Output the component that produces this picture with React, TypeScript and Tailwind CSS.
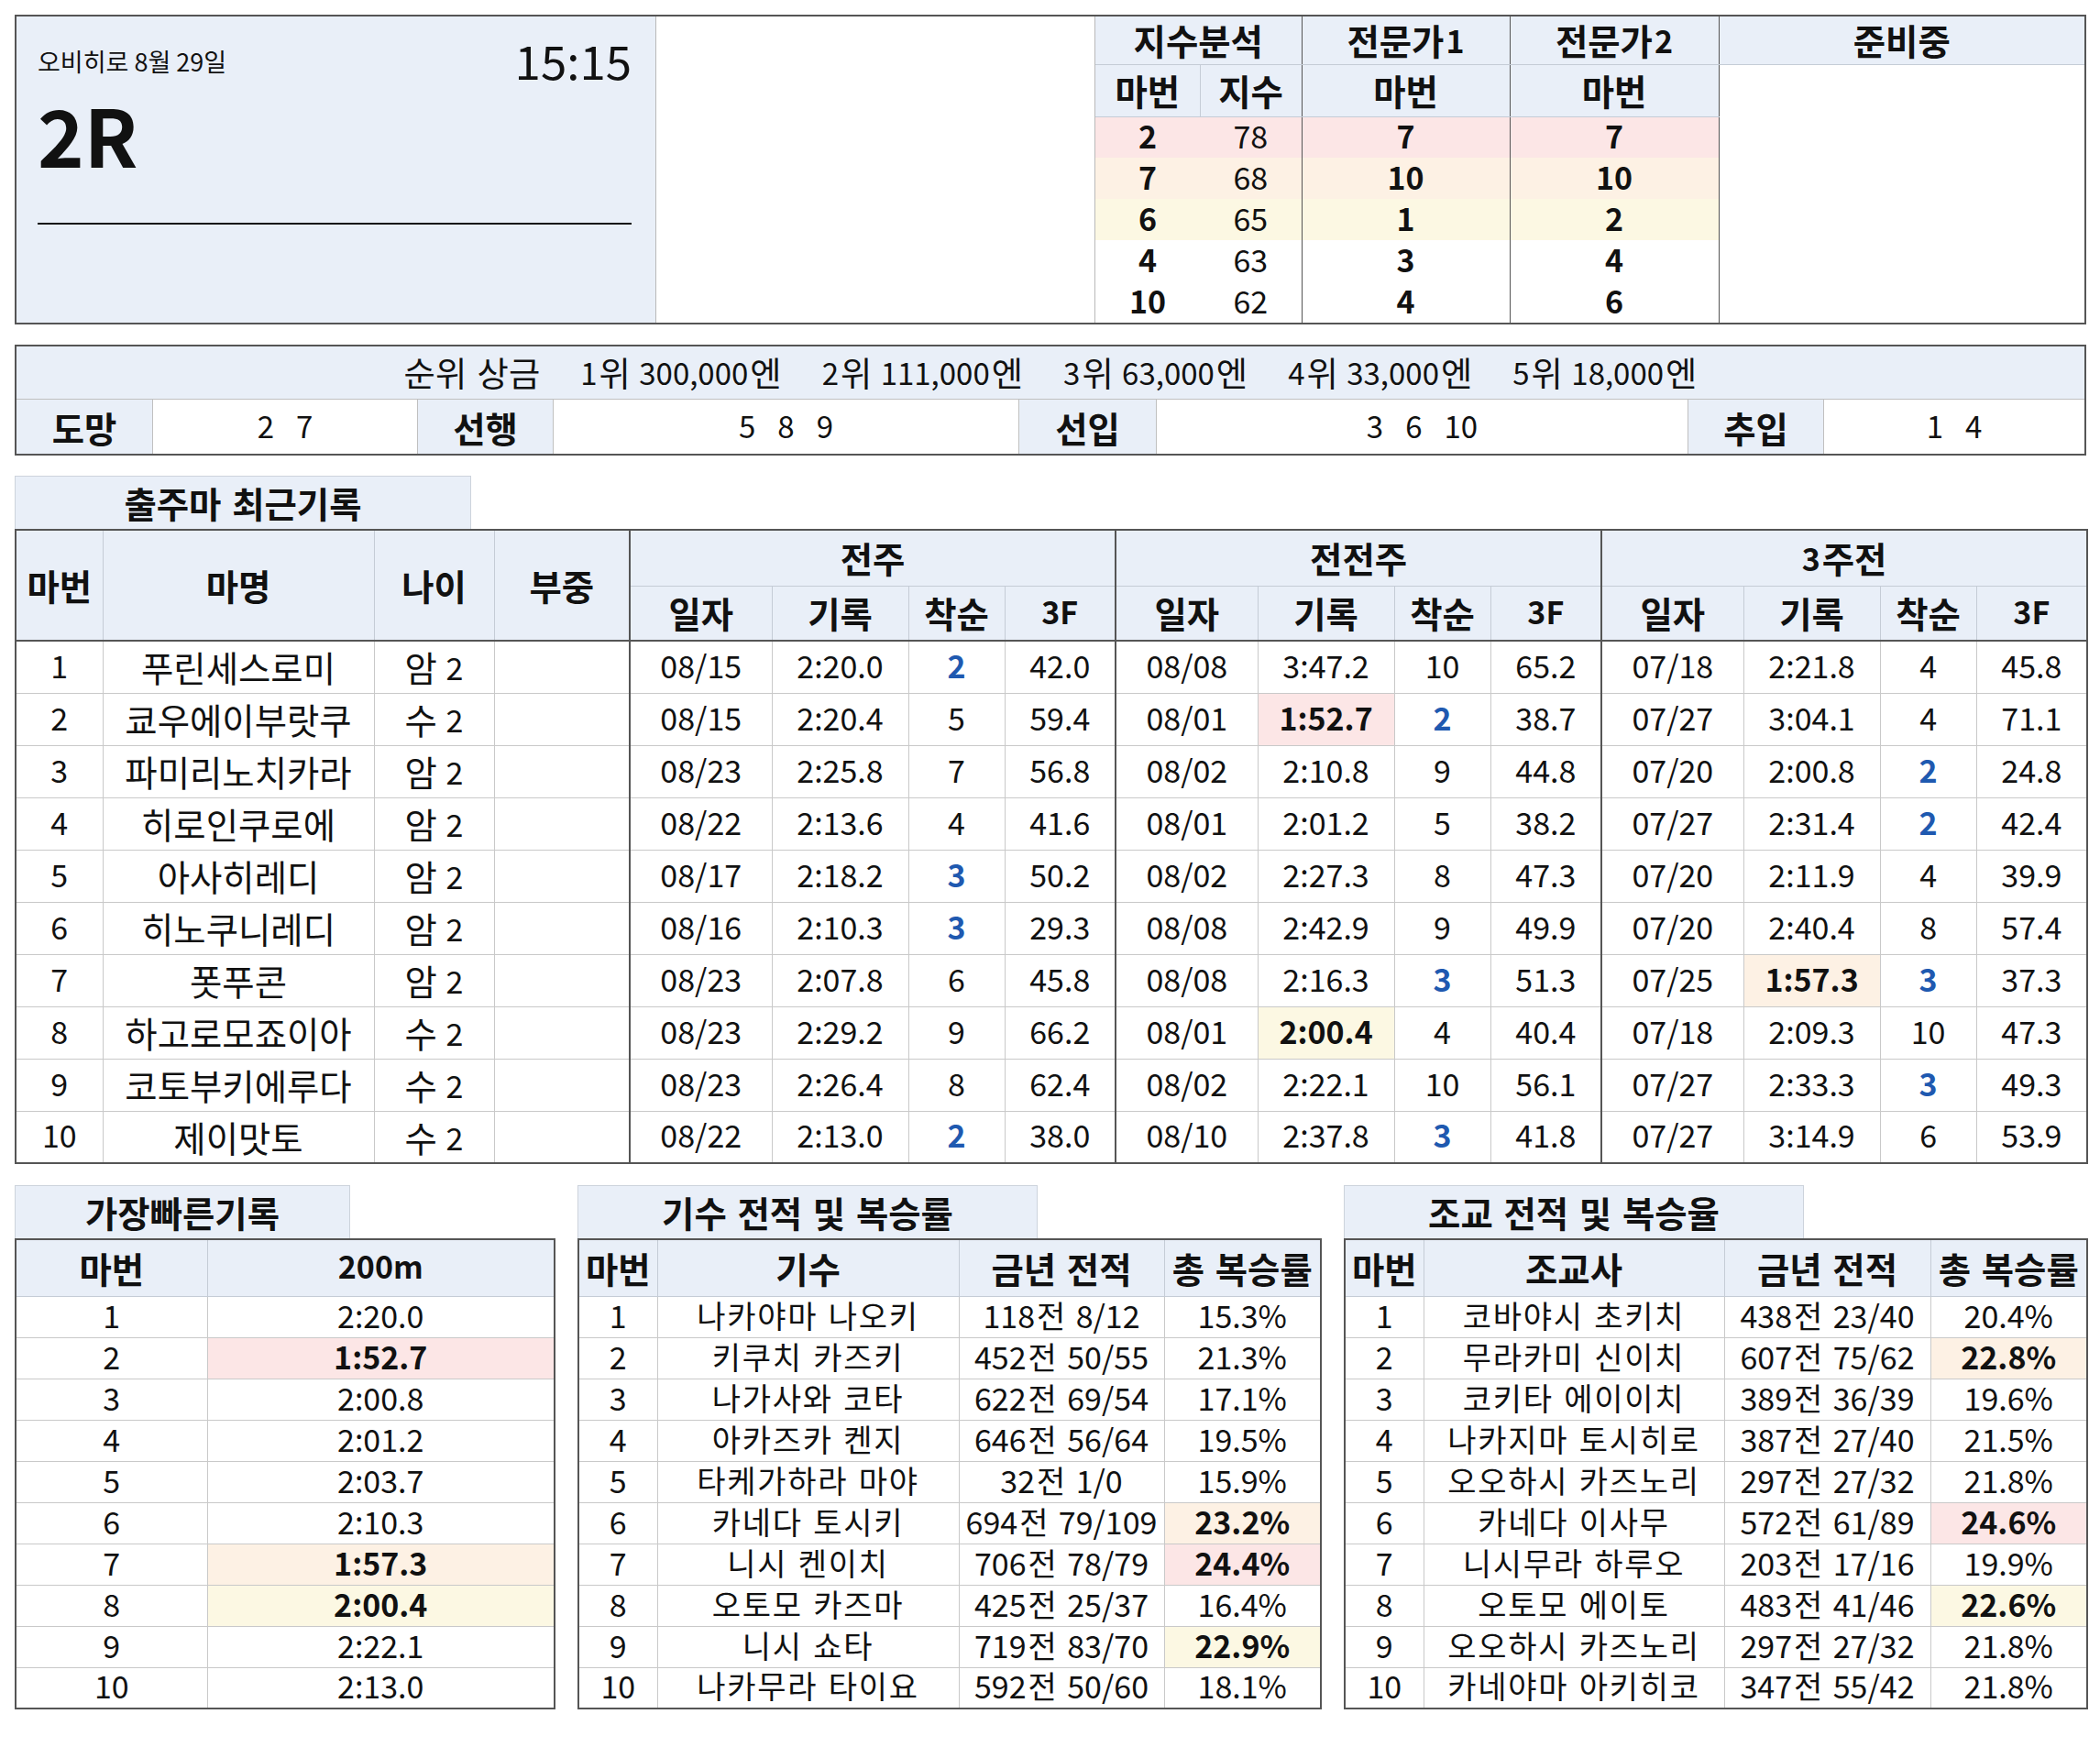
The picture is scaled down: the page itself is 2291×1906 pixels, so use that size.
import React from 'react';

const HB = 'bg-[#e9eff8]';
const HL: Record<string, string> = {
  p: 'bg-[#fce6e6] font-bold',
  o: 'bg-[#fdf1e4] font-bold',
  y: 'bg-[#fcf8e3] font-bold',
  n: '',
};

function K({ t, small }: { t: string | number; small?: boolean }) {
  if (typeof t === 'number') return <span>{t}</span>;
  const parts = t.split(/([\uAC00-\uD7A3]+)/).filter((p) => p.length > 0);
  const hk = small ? 'tracking-[0.05em]' : 'text-[1.13em] translate-y-[0.05em]';
  return (
    <span className="inline-flex items-baseline gap-[2px] whitespace-pre">
      {parts.map((p, i) =>
        /[\uAC00-\uD7A3]/.test(p) ? (
          <span key={i} className={hk}>
            {p}
          </span>
        ) : (
          <span key={i}>{p}</span>
        ),
      )}
    </span>
  );
}

type Week = [string, string, number, string, string?];
type Horse = [number, string, string, Week, Week, Week];

const horses: Horse[] = [
  [1, '푸린세스로미', '암 2', ['08/15', '2:20.0', 2, '42.0'], ['08/08', '3:47.2', 10, '65.2'], ['07/18', '2:21.8', 4, '45.8']],
  [2, '쿄우에이부랏쿠', '수 2', ['08/15', '2:20.4', 5, '59.4'], ['08/01', '1:52.7', 2, '38.7', 'p'], ['07/27', '3:04.1', 4, '71.1']],
  [3, '파미리노치카라', '암 2', ['08/23', '2:25.8', 7, '56.8'], ['08/02', '2:10.8', 9, '44.8'], ['07/20', '2:00.8', 2, '24.8']],
  [4, '히로인쿠로에', '암 2', ['08/22', '2:13.6', 4, '41.6'], ['08/01', '2:01.2', 5, '38.2'], ['07/27', '2:31.4', 2, '42.4']],
  [5, '아사히레디', '암 2', ['08/17', '2:18.2', 3, '50.2'], ['08/02', '2:27.3', 8, '47.3'], ['07/20', '2:11.9', 4, '39.9']],
  [6, '히노쿠니레디', '암 2', ['08/16', '2:10.3', 3, '29.3'], ['08/08', '2:42.9', 9, '49.9'], ['07/20', '2:40.4', 8, '57.4']],
  [7, '폿푸콘', '암 2', ['08/23', '2:07.8', 6, '45.8'], ['08/08', '2:16.3', 3, '51.3'], ['07/25', '1:57.3', 3, '37.3', 'o']],
  [8, '하고로모죠이아', '수 2', ['08/23', '2:29.2', 9, '66.2'], ['08/01', '2:00.4', 4, '40.4', 'y'], ['07/18', '2:09.3', 10, '47.3']],
  [9, '코토부키에루다', '수 2', ['08/23', '2:26.4', 8, '62.4'], ['08/02', '2:22.1', 10, '56.1'], ['07/27', '2:33.3', 3, '49.3']],
  [10, '제이맛토', '수 2', ['08/22', '2:13.0', 2, '38.0'], ['08/10', '2:37.8', 3, '41.8'], ['07/27', '3:14.9', 6, '53.9']],
];

const fastest: [number, string, string][] = [
  [1, '2:20.0', 'n'],
  [2, '1:52.7', 'p'],
  [3, '2:00.8', 'n'],
  [4, '2:01.2', 'n'],
  [5, '2:03.7', 'n'],
  [6, '2:10.3', 'n'],
  [7, '1:57.3', 'o'],
  [8, '2:00.4', 'y'],
  [9, '2:22.1', 'n'],
  [10, '2:13.0', 'n'],
];

const jockeys: [number, string, string, string, string][] = [
  [1, '나카야마 나오키', '118전 8/12', '15.3%', 'n'],
  [2, '키쿠치 카즈키', '452전 50/55', '21.3%', 'n'],
  [3, '나가사와 코타', '622전 69/54', '17.1%', 'n'],
  [4, '아카즈카 켄지', '646전 56/64', '19.5%', 'n'],
  [5, '타케가하라 마야', '32전 1/0', '15.9%', 'n'],
  [6, '카네다 토시키', '694전 79/109', '23.2%', 'o'],
  [7, '니시 켄이치', '706전 78/79', '24.4%', 'p'],
  [8, '오토모 카즈마', '425전 25/37', '16.4%', 'n'],
  [9, '니시 쇼타', '719전 83/70', '22.9%', 'y'],
  [10, '나카무라 타이요', '592전 50/60', '18.1%', 'n'],
];

const trainers: [number, string, string, string, string][] = [
  [1, '코바야시 초키치', '438전 23/40', '20.4%', 'n'],
  [2, '무라카미 신이치', '607전 75/62', '22.8%', 'o'],
  [3, '코키타 에이이치', '389전 36/39', '19.6%', 'n'],
  [4, '나카지마 토시히로', '387전 27/40', '21.5%', 'n'],
  [5, '오오하시 카즈노리', '297전 27/32', '21.8%', 'n'],
  [6, '카네다 이사무', '572전 61/89', '24.6%', 'p'],
  [7, '니시무라 하루오', '203전 17/16', '19.9%', 'n'],
  [8, '오토모 에이토', '483전 41/46', '22.6%', 'y'],
  [9, '오오하시 카즈노리', '297전 27/32', '21.8%', 'n'],
  [10, '카네야마 아키히코', '347전 55/42', '21.8%', 'n'],
];

function TopSection() {
  const rows: [number, number, number, number, string][] = [
    [2, 78, 7, 7, 'bg-[#fce6e6]'],
    [7, 68, 10, 10, 'bg-[#fdf1e4]'],
    [6, 65, 1, 2, 'bg-[#fcf8e3]'],
    [4, 63, 3, 4, ''],
    [10, 62, 4, 6, ''],
  ];
  const th1 = `${HB} text-[34px] font-bold leading-none border-b border-[#c5ccd6] pb-[4px]`;
  return (
    <div className="flex w-[2260px] h-[338px] border-2 border-[#555]">
      <div className={`w-[698px] h-full ${HB} border-r border-[#b9b9b9] pl-[23px] pr-[26px] pt-[22px] flex flex-col`}>
        <div className="flex justify-between items-start">
          <div className="mt-[13px] text-[27px] leading-none">오비히로 8월 29일</div>
          <div className="text-[51px] leading-none">15:15</div>
        </div>
        <div className="mt-[12px] text-[86px] font-bold leading-none">2R</div>
        <div className="mt-[54px] h-[2px] bg-[#111] w-full"></div>
      </div>
      <div className="w-[479px] h-full bg-white border-r border-[#b9b9b9]"></div>
      <table className="flex-1 table-fixed border-collapse h-full">
        <colgroup>
          <col className="w-[114px]" />
          <col className="w-[111px]" />
          <col className="w-[227px]" />
          <col className="w-[228px]" />
          <col />
        </colgroup>
        <tbody>
          <tr className="h-[52px]">
            <th colSpan={2} className={`${th1} border-r border-r-[#555]`}>
              <K t="지수분석" />
            </th>
            <th className={`${th1} border-r border-r-[#555]`}>
              <K t="전문가1" />
            </th>
            <th className={`${th1} border-r border-r-[#555]`}>
              <K t="전문가2" />
            </th>
            <th className={th1}>
              <K t="준비중" />
            </th>
          </tr>
          <tr className="h-[57px]">
            <th className={`${th1} border-r border-r-[#c5ccd6]`}>
              <K t="마번" />
            </th>
            <th className={`${th1} border-r border-r-[#555]`}>
              <K t="지수" />
            </th>
            <th className={`${th1} border-r border-r-[#555]`}>
              <K t="마번" />
            </th>
            <th className={`${th1} border-r border-r-[#555]`}>
              <K t="마번" />
            </th>
            <td rowSpan={6} className="bg-white"></td>
          </tr>
          {rows.map((r, i) => (
            <tr key={i} className={`h-[45px] ${r[4]}`}>
              <td className="text-center text-[34px] font-bold leading-none pb-[3px]">{r[0]}</td>
              <td className="text-center text-[34px] leading-none border-r border-r-[#555] pb-[3px]">{r[1]}</td>
              <td className="text-center text-[34px] font-bold leading-none border-r border-r-[#555] pb-[3px]">{r[2]}</td>
              <td className="text-center text-[34px] font-bold leading-none border-r border-r-[#555] pb-[3px]">{r[3]}</td>
            </tr>
          ))}
        </tbody>
      </table>
    </div>
  );
}

function PrizeSection() {
  const prizes = ['순위 상금', '1위 300,000엔', '2위 111,000엔', '3위 63,000엔', '4위 33,000엔', '5위 18,000엔'];
  const styles: [string, string[], string, string][] = [
    ['도망', ['2', '7'], 'w-[148px]', 'w-[289px]'],
    ['선행', ['5', '8', '9'], 'w-[148px]', 'w-[508px]'],
    ['선입', ['3', '6', '10'], 'w-[150px]', 'w-[580px]'],
    ['추입', ['1', '4'], 'w-[148px]', 'flex-1'],
  ];
  return (
    <div className="mt-[22px] w-[2260px] border-2 border-[#555] flex flex-col">
      <div className={`h-[58px] ${HB} flex items-center justify-center gap-[44px] text-[33px] leading-none border-b border-[#c0c0c0] pb-[4px]`}>
        {prizes.map((p) => (
          <K key={p} t={p} />
        ))}
      </div>
      <div className="h-[59px] flex">
        {styles.map(([label, nums, lw, vw], i) => (
          <React.Fragment key={label}>
            <div className={`${lw} ${HB} flex items-center justify-center text-[34px] font-bold leading-none pb-[3px] ${i > 0 ? 'border-l border-[#c0c0c0]' : ''}`}>
              <K t={label} />
            </div>
            <div className={`${vw} bg-white flex items-center justify-center gap-[24px] text-[33px] leading-none border-l border-[#c0c0c0] pb-[3px]`}>
              {nums.map((n) => (
                <span key={n}>{n}</span>
              ))}
            </div>
          </React.Fragment>
        ))}
      </div>
    </div>
  );
}

function Tab({ title, w }: { title: string; w: string }) {
  return (
    <div className={`${w} h-[58px] ${HB} border-t border-l border-r border-[#cdd3dc] flex items-center justify-center text-[34px] font-bold leading-none pb-[4px]`}>
      <K t={title} />
    </div>
  );
}

function Rank({ n }: { n: number }) {
  if (n <= 3) return <span className="text-[#1f59b0] font-bold">{n}</span>;
  return <span>{n}</span>;
}

function RecentTable() {
  const th = `${HB} text-[34px] font-bold leading-none text-center border border-[#c5ccd6] pb-[4px]`;
  const td = 'text-[34px] leading-none text-center border border-[#c9c9c9] whitespace-nowrap pb-[4px]';
  const groups = ['전주', '전전주', '3주전'];
  return (
    <div className="mt-[22px] flex flex-col">
      <Tab title="출주마 최근기록" w="w-[498px]" />
      <table className="w-[2260px] table-fixed border-collapse border-2 border-[#555]">
        <colgroup>
          <col className="w-[95px]" />
          <col className="w-[296px]" />
          <col className="w-[131px]" />
          <col className="w-[148px]" />
          {[0, 1, 2].map((g) => (
            <React.Fragment key={g}>
              <col className="w-[155px]" />
              <col className="w-[149px]" />
              <col className="w-[105px]" />
              <col className="w-[121px]" />
            </React.Fragment>
          ))}
        </colgroup>
        <thead>
          <tr className="h-[61px]">
            {['마번', '마명', '나이', '부중'].map((h) => (
              <th key={h} rowSpan={2} className={`${th} border-b-2 border-b-[#555]`}>
                <K t={h} />
              </th>
            ))}
            {groups.map((g) => (
              <th key={g} colSpan={4} className={`${th} border-l-2 border-l-[#555]`}>
                <K t={g} />
              </th>
            ))}
          </tr>
          <tr className="h-[60px]">
            {groups.map((g) => (
              <React.Fragment key={g}>
                <th className={`${th} border-l-2 border-l-[#555] border-b-2 border-b-[#555]`}>
                  <K t="일자" />
                </th>
                <th className={`${th} border-b-2 border-b-[#555]`}>
                  <K t="기록" />
                </th>
                <th className={`${th} border-b-2 border-b-[#555]`}>
                  <K t="착순" />
                </th>
                <th className={`${th} border-b-2 border-b-[#555]`}>3F</th>
              </React.Fragment>
            ))}
          </tr>
        </thead>
        <tbody>
          {horses.map((h) => (
            <tr key={h[0]} className="h-[57px]">
              <td className={td}>{h[0]}</td>
              <td className={td}>
                <K t={h[1]} />
              </td>
              <td className={td}>
                <K t={h[2]} />
              </td>
              <td className={td}></td>
              {[h[3], h[4], h[5]].map((w, i) => (
                <React.Fragment key={i}>
                  <td className={`${td} border-l-2 border-l-[#555]`}>{w[0]}</td>
                  <td className={`${td} ${HL[w[4] ?? 'n']}`}>{w[1]}</td>
                  <td className={td}>
                    <Rank n={w[2]} />
                  </td>
                  <td className={td}>{w[3]}</td>
                </React.Fragment>
              ))}
            </tr>
          ))}
        </tbody>
      </table>
    </div>
  );
}

function FastestTable() {
  const th = `${HB} text-[34px] font-bold leading-none text-center border border-[#c5ccd6] pb-[4px]`;
  const td = 'text-[34px] leading-none text-center border border-[#c9c9c9] whitespace-nowrap pb-[4px]';
  return (
    <div className="flex flex-col w-[588px]">
      <Tab title="가장빠른기록" w="w-[366px]" />
      <table className="w-[588px] table-fixed border-collapse border-2 border-[#555]">
        <colgroup>
          <col className="w-[209px]" />
          <col className="w-[379px]" />
        </colgroup>
        <thead>
          <tr className="h-[62px]">
            <th className={th}>
              <K t="마번" />
            </th>
            <th className={th}>200m</th>
          </tr>
        </thead>
        <tbody>
          {fastest.map((r) => (
            <tr key={r[0]} className="h-[45px]">
              <td className={td}>{r[0]}</td>
              <td className={`${td} ${HL[r[2]]}`}>{r[1]}</td>
            </tr>
          ))}
        </tbody>
      </table>
    </div>
  );
}

function StatTable({
  title,
  col2,
  data,
  widths,
}: {
  title: string;
  col2: string;
  data: [number, string, string, string, string][];
  widths: [string, string, string, string];
}) {
  const th = `${HB} text-[34px] font-bold leading-none text-center border border-[#c5ccd6] whitespace-nowrap pb-[4px]`;
  const td = 'text-[34px] leading-none text-center border border-[#c9c9c9] whitespace-nowrap pb-[4px]';
  return (
    <div className="flex flex-col w-[810px]">
      <Tab title={title} w="w-[502px]" />
      <table className="w-[810px] table-fixed border-collapse border-2 border-[#555]">
        <colgroup>
          {widths.map((w, i) => (
            <col key={i} className={w} />
          ))}
        </colgroup>
        <thead>
          <tr className="h-[62px]">
            <th className={th}>
              <K t="마번" />
            </th>
            <th className={th}>
              <K t={col2} />
            </th>
            <th className={th}>
              <K t="금년 전적" />
            </th>
            <th className={th}>
              <K t="총 복승률" />
            </th>
          </tr>
        </thead>
        <tbody>
          {data.map((r) => (
            <tr key={r[0]} className="h-[45px]">
              <td className={td}>{r[0]}</td>
              <td className={td}>
                <K t={r[1]} small />
              </td>
              <td className={td}>
                <K t={r[2]} small />
              </td>
              <td className={`${td} ${HL[r[4]]}`}>{r[3]}</td>
            </tr>
          ))}
        </tbody>
      </table>
    </div>
  );
}

export default function App() {
  return (
    <div className="w-[2291px] min-h-[1906px] bg-white pt-[16px] pl-[16px] text-[#111] font-['Noto_Sans_CJK_KR','Noto_Sans',sans-serif]">
      <TopSection />
      <PrizeSection />
      <RecentTable />
      <div className="mt-[23px] flex w-[2260px] justify-between">
        <FastestTable />
        <StatTable
          title="기수 전적 및 복승률"
          col2="기수"
          data={jockeys}
          widths={['w-[86px]', 'w-[329px]', 'w-[224px]', 'w-[171px]']}
        />
        <StatTable
          title="조교 전적 및 복승율"
          col2="조교사"
          data={trainers}
          widths={['w-[86px]', 'w-[328px]', 'w-[225px]', 'w-[171px]']}
        />
      </div>
    </div>
  );
}
